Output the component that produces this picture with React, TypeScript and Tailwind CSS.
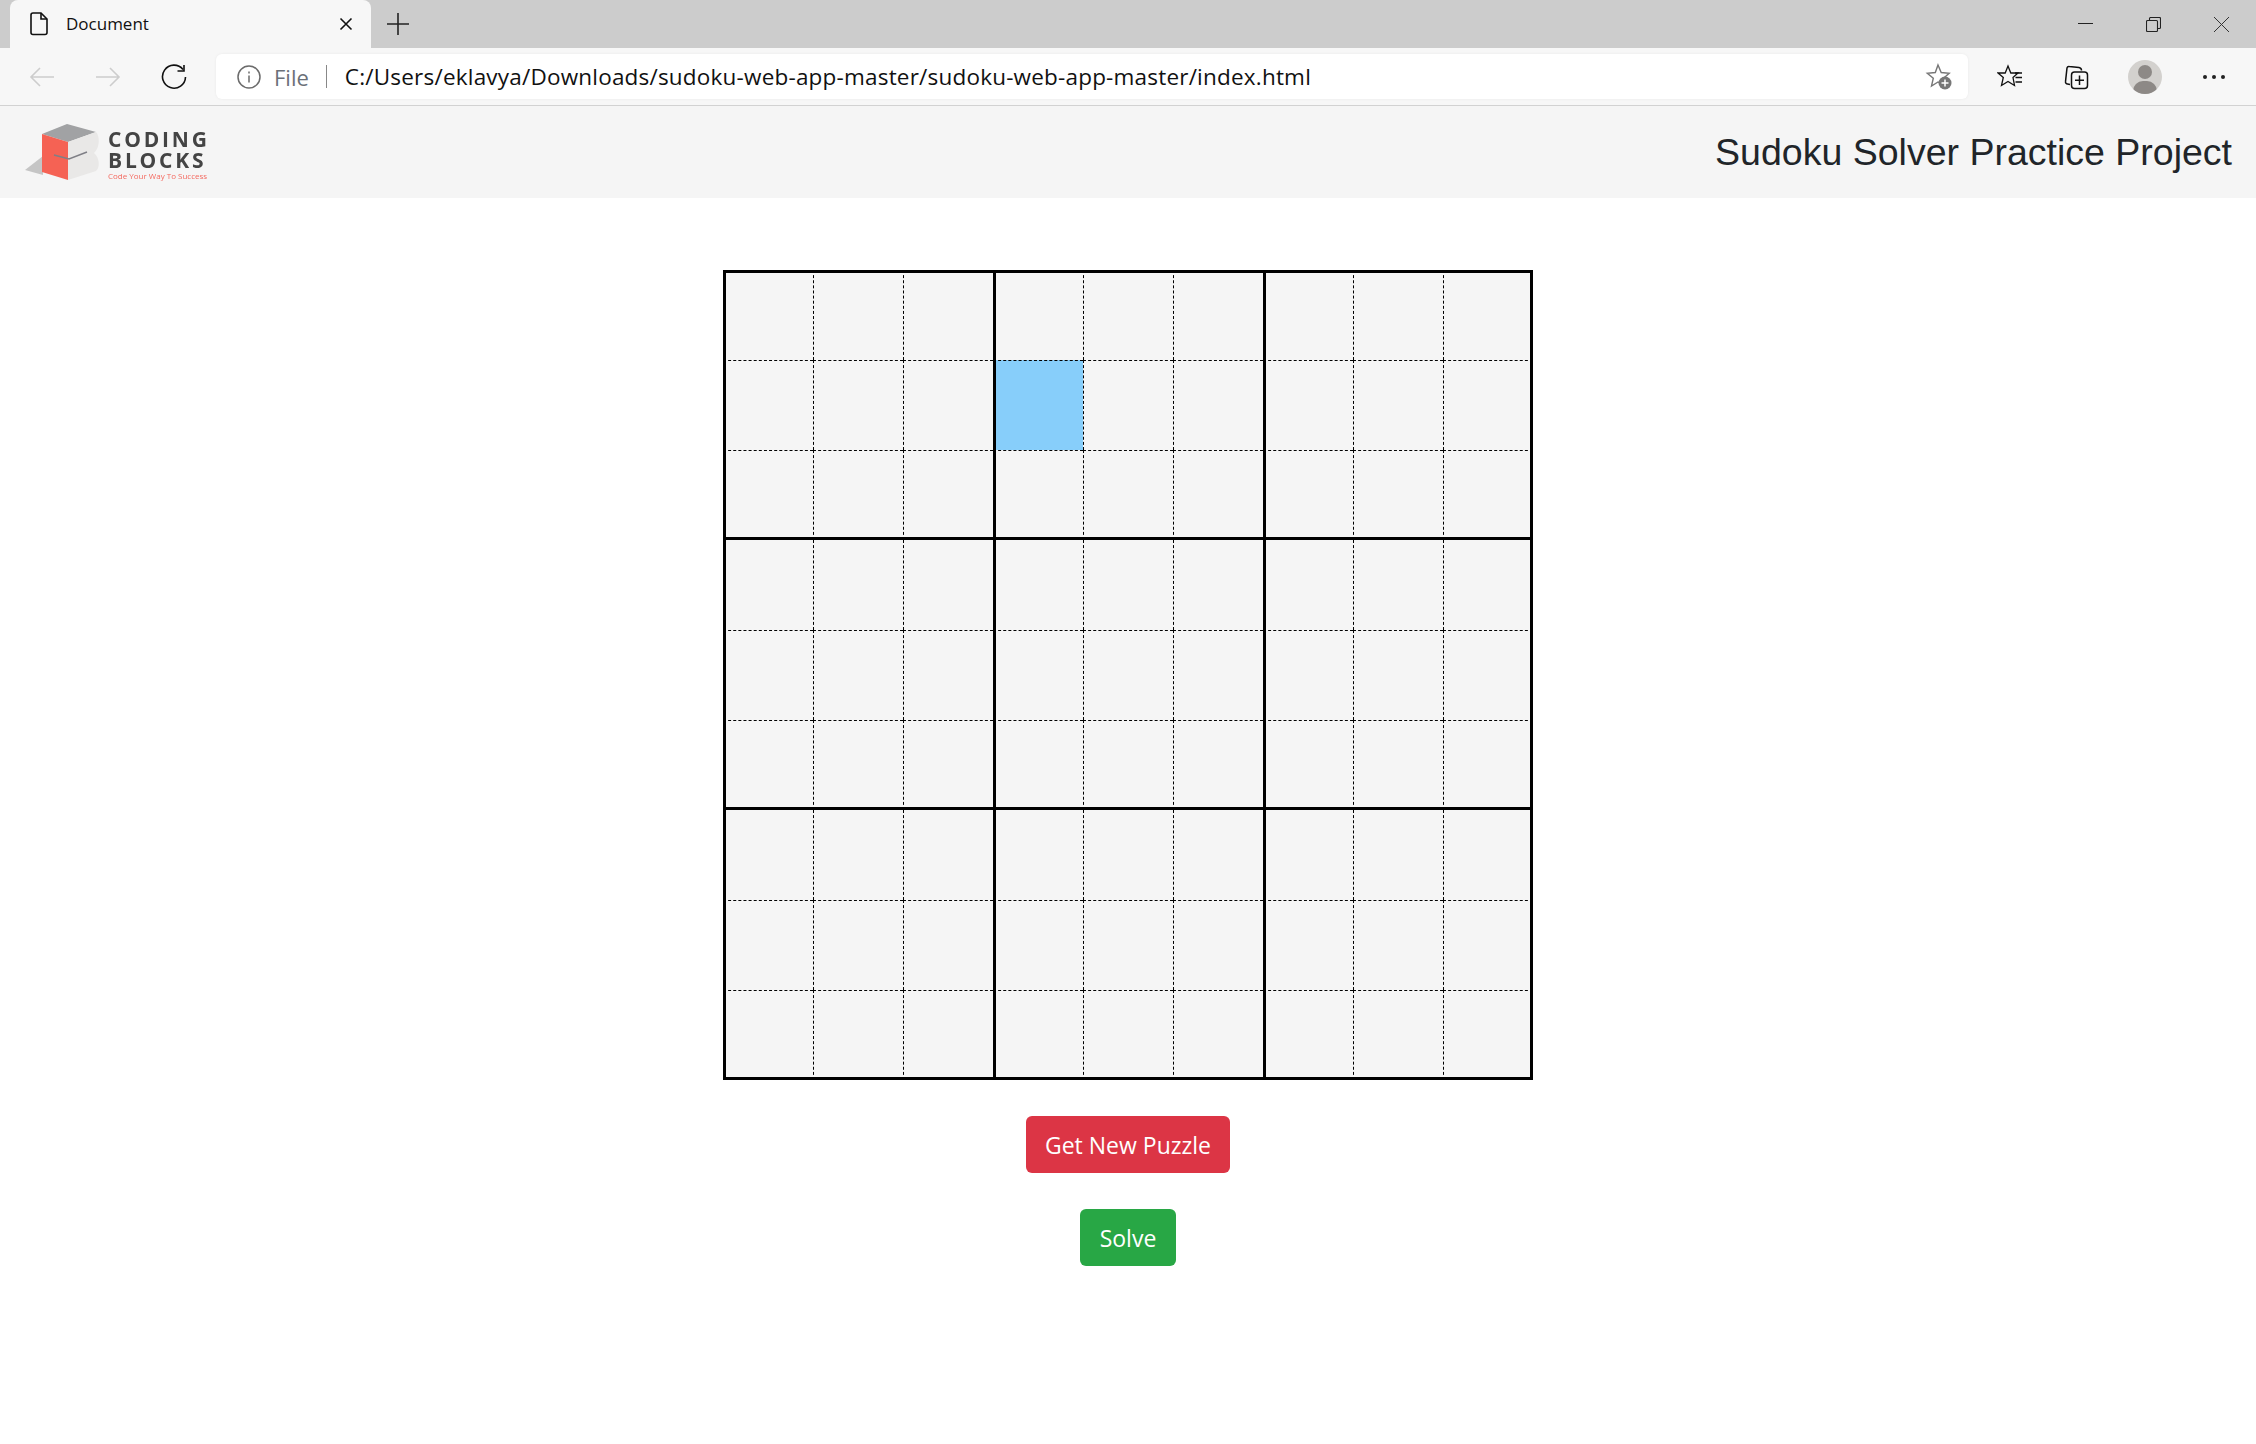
import React from "react";

const seg = { fontFamily: '"Open Sans", "Noto Sans", sans-serif' };

function Tab() {
  return (
    <div className="flex h-[48px] w-[361px] items-center rounded-t-[8px] bg-[#f7f7f7] pl-[20px] pr-[18px]">
      <svg width="18" height="24" viewBox="0 0 18 24" fill="none" stroke="#111" strokeWidth="1.6">
        <path d="M3 1h8l6 6v13.5a2 2 0 0 1-2 2H3a2 2 0 0 1-2-2V3a2 2 0 0 1 2-2z" />
        <path d="M11 1v6h6" />
      </svg>
      <span className="ml-[18px] flex-1 text-[17px] text-[#111]">Document</span>
      <svg width="14" height="14" viewBox="0 0 14 14" stroke="#111" strokeWidth="1.6">
        <path d="M1.5 1.5l11 11M12.5 1.5l-11 11" />
      </svg>
    </div>
  );
}

function WindowControls() {
  return (
    <div className="flex h-[48px] items-center gap-[53px] pr-[27px]">
      <svg width="15" height="15" viewBox="0 0 15 15" stroke="#222" strokeWidth="1" className="-mt-[5px] -ml-[1px]">
        <path d="M0 9.5h15" />
      </svg>
      <svg width="15" height="15" viewBox="0 0 15 15" fill="none" stroke="#222" strokeWidth="1.1">
        <rect x="0.5" y="3.5" width="11" height="11" rx="1" />
        <path d="M3.5 3.5V1.5a1 1 0 0 1 1-1h9a1 1 0 0 1 1 1v9a1 1 0 0 1-1 1h-2" />
      </svg>
      <svg width="15" height="15" viewBox="0 0 15 15" stroke="#333" strokeWidth="1">
        <path d="M0 0l15 15M15 0L0 15" />
      </svg>
    </div>
  );
}

function Toolbar() {
  return (
    <div className="flex h-[58px] items-center border-b border-[#d2d2d2] bg-[#f7f7f7]">
      <svg width="26" height="22" viewBox="0 0 26 22" fill="none" stroke="#cdcdcd" strokeWidth="1.6" className="ml-[29px]">
        <path d="M25 11H2M11 2l-9 9 9 9" />
      </svg>
      <svg width="26" height="22" viewBox="0 0 26 22" fill="none" stroke="#cdcdcd" strokeWidth="1.6" className="ml-[40px]">
        <path d="M1 11h23M15 2l9 9-9 9" />
      </svg>
      <svg width="26" height="26" viewBox="0 0 26 26" fill="none" stroke="#111" strokeWidth="1.6" className="ml-[40px]">
        <path d="M22 5.5A11.5 11.5 0 1 0 24.5 13" />
        <path d="M23 1v6h-6.500" />
      </svg>
      <div className="ml-[29px] flex h-[45px] w-[1752px] items-center rounded-[6px] bg-white shadow-[0_0_3px_rgba(0,0,0,0.06)]">
        <svg width="24" height="24" viewBox="0 0 24 24" fill="none" stroke="#6b6b6b" strokeWidth="1.5" className="ml-[21px]">
          <circle cx="12" cy="12" r="11" />
          <path d="M12 10.500v7M12 6.500v2" />
        </svg>
        <span className="ml-[13px] pt-[1px] text-[22px] text-[#6b7078]">File</span>
        <span className="ml-[17px] h-[23px] w-px bg-[#888]" />
        <span className="ml-[18px] pt-[1px] text-[22.500px] tracking-[0.200px] text-[#111]">
          C:/Users/eklavya/Downloads/sudoku-web-app-master/sudoku-web-app-master/index.html
        </span>
        <svg width="28" height="28" viewBox="0 0 28 28" className="ml-auto mr-[15px]">
          <path d="M13 2l3.200 7.500 8 .7-6 5.300 1.500 7.500L13 19l-6.500 4 1.800-7.800-6-5 8-.7z" fill="none" stroke="#777" strokeWidth="1.400" />
          <circle cx="20" cy="20" r="6.500" fill="#777" />
          <path d="M20 16.500v7M16.500 20h7" stroke="#fff" strokeWidth="1.500" />
        </svg>
      </div>
      <svg width="26" height="26" viewBox="0 0 26 26" fill="none" stroke="#111" strokeWidth="1.300" className="ml-[29px]">
        <path d="M11 2l2.800 7H21l-5 4.500 1.500 8-6.500-4-6.500 4 1.800-8L1 9h7.200z" />
        <path d="M18 9h7M18.500 13.500h6.500M18.500 18h6.500" />
      </svg>
      <svg width="26" height="26" viewBox="0 0 26 26" fill="none" stroke="#111" strokeWidth="1.500" className="ml-[40px]">
        <path d="M7 20.500l-2.500-.5a2 2 0 0 1-2-2.300L4 4a2 2 0 0 1 2.300-1.500L16 3.500a3 3 0 0 1 2.500 3" />
        <rect x="8.500" y="8" width="16" height="16.500" rx="3" />
        <path d="M16.500 11.500v9.500M12 16.200h9" />
      </svg>
      <div className="relative ml-[39px] h-[34px] w-[34px] overflow-hidden rounded-full bg-[#d3d1ce]">
        <div className="absolute left-[10px] top-[5px] h-[14px] w-[14px] rounded-full bg-[#8d8986]" />
        <div className="absolute left-[5px] top-[21px] h-[20px] w-[24px] rounded-full bg-[#8d8986]" />
      </div>
      <div className="ml-[41px] flex gap-[5px]">
        <span className="h-[4px] w-[4px] rounded-full bg-[#222]" />
        <span className="h-[4px] w-[4px] rounded-full bg-[#222]" />
        <span className="h-[4px] w-[4px] rounded-full bg-[#222]" />
      </div>
    </div>
  );
}

function Logo() {
  return (
    <div className="flex items-center blur-[0.3px]">
      <svg width="84" height="58" viewBox="0 0 84 58">
        <path d="M1 47l18-14v19z" fill="#c5c5c5" />
        <path d="M18 11L43 1l29 8-28 10z" fill="#a1a2a4" />
        <path d="M18 11l26 8v38l-26-8z" fill="#f56254" />
        <path d="M44 19l28-10c4 4 4 16-2 21 6 5 6 15 2 18l-28 9z" fill="#e9e8e7" />
        <path d="M30 32l15 4 18-7" fill="none" stroke="#7f7f86" strokeWidth="1.500" />
      </svg>
      <div className="mt-[5px] flex w-[100px] flex-col">
        <span className="text-[21px] font-bold leading-[21px] tracking-[2.800px] text-[#444]">
          CODING
          <br />
          BLOCKS
        </span>
        <span className="whitespace-nowrap text-[8px] leading-[9px] text-[#f46a60]">Code Your Way To Success</span>
      </div>
    </div>
  );
}

function Cell({ r, c }: { r: number; c: number }) {
  const left = c % 3 === 0 ? "border-l-[3px] [border-left-style:solid]" : "border-l [border-left-style:dashed]";
  const top = r === 0 ? "border-t-[3px] [border-top-style:solid]" : r % 3 === 0 ? "" : "border-t [border-top-style:dashed]";
  const right = c === 8 ? "border-r-[3px] [border-right-style:solid]" : "";
  const bottom = r % 3 === 2 ? "border-b-[3px] [border-bottom-style:solid]" : "";
  const bg = r === 1 && c === 3 ? "bg-[#87cefa]" : "bg-[#f5f5f5]";
  return <div className={`h-[90px] w-[90px] border-black ${bg} ${left} ${top} ${right} ${bottom}`} />;
}

export default function App() {
  const rows = [0, 1, 2, 3, 4, 5, 6, 7, 8];
  return (
    <div className="flex h-[1444px] flex-col bg-white" style={seg}>
      <div className="flex h-[48px] items-center bg-[#cccccc] pl-[10px]">
        <Tab />
        <svg width="22" height="22" viewBox="0 0 22 22" stroke="#222" strokeWidth="1.600" className="ml-[16px]">
          <path d="M11 0v22M0 11h22" />
        </svg>
        <div className="flex-1" />
        <WindowControls />
      </div>
      <Toolbar />
      <nav className="flex h-[92px] items-center justify-between bg-[#f5f5f5] pl-[24px] pr-[24px]">
        <Logo />
        <h1 className="text-[37.500px] font-normal text-[#212529]" style={{ fontFamily: '"Liberation Sans", Arial, sans-serif' }}>
          Sudoku Solver Practice Project
        </h1>
      </nav>
      <main className="flex flex-col items-center pt-[72px]">
        <div className="grid grid-cols-[repeat(9,90px)]">
          {rows.flatMap((r) => rows.map((c) => <Cell key={`${r}-${c}`} r={r} c={c} />))}
        </div>
        <button className="mt-[36px] h-[57px] w-[204px] rounded-[6px] bg-[#dc3545] pt-[1px] text-[23px] text-white">Get New Puzzle</button>
        <button className="mt-[36px] h-[57px] w-[96px] rounded-[6px] bg-[#28a745] pt-[1px] text-[23px] text-white">Solve</button>
      </main>
    </div>
  );
}
